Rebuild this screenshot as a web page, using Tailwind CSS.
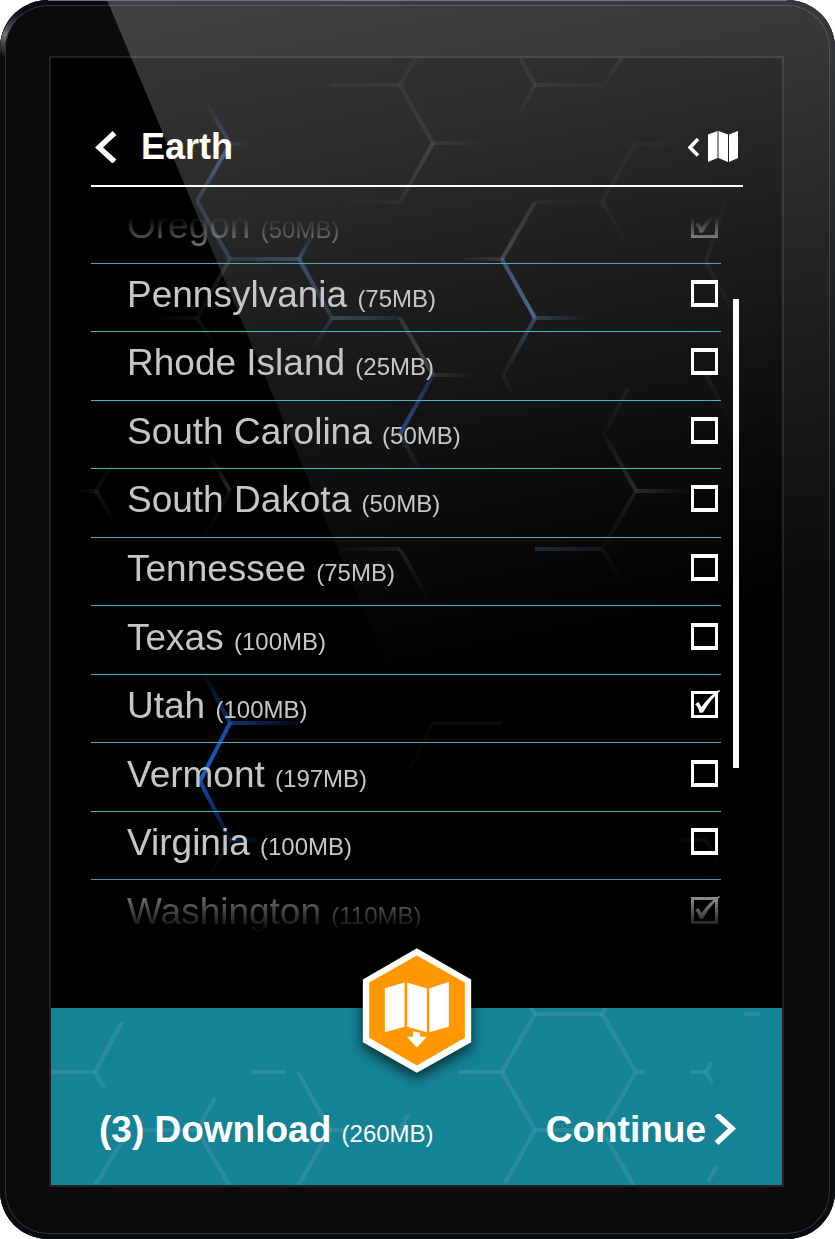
<!DOCTYPE html>
<html lang="en">
<head>
<meta charset="utf-8">
<meta name="viewport" content="width=device-width, initial-scale=1">
<title>Earth – Map downloads</title>
<script src="https://cdn.jsdelivr.net/npm/@tailwindcss/browser@4"></script>
</head>
<body class="bg-white font-['Liberation_Sans',Arial,sans-serif] text-[37px] leading-none">
<div class="relative flex min-h-screen flex-col overflow-hidden rounded-[48px] bg-[#0b0b0b] pt-14 pr-[51px] pb-[52px] pl-[49px] shadow-[inset_0_0_0_5px_#080b10,inset_0_0_0_6px_#303030]">

  <!-- Glass reflection across bezel and screen -->
  <svg class="pointer-events-none absolute inset-0 z-10 h-full w-full" viewBox="0 0 835 1239" preserveAspectRatio="none" aria-hidden="true">
    <defs>
      <linearGradient id="glare" gradientUnits="userSpaceOnUse" x1="0" y1="0" x2="146" y2="730">
        <stop offset="0" stop-color="#fff" stop-opacity=".23"/>
        <stop offset=".28" stop-color="#fff" stop-opacity=".175"/>
        <stop offset=".5" stop-color="#fff" stop-opacity=".115"/>
        <stop offset=".78" stop-color="#fff" stop-opacity=".045"/>
        <stop offset="1" stop-color="#fff" stop-opacity="0"/>
      </linearGradient>
      <linearGradient id="corner" gradientUnits="userSpaceOnUse" x1="0" y1="56" x2="24" y2="8">
        <stop offset="0" stop-color="#8a8d92" stop-opacity="0"/>
        <stop offset=".4" stop-color="#8a8d92" stop-opacity=".8"/>
        <stop offset="1" stop-color="#2a333d" stop-opacity="0"/>
      </linearGradient>
    </defs>
    <path d="M107 0H835V760H426Z" fill="url(#glare)"/>
    <path d="M3 56A46 46 0 0 1 28 8" fill="none" stroke="url(#corner)" stroke-width="5"/>
    <path d="M48 .5H787" stroke="#70777c" stroke-width="1"/>
  </svg>

  <div class="relative flex flex-1 flex-col border-2 border-[#202020] bg-black">
    <!-- Honeycomb backdrop -->
    <svg id="comb" class="pointer-events-none absolute inset-0 h-full w-full" viewBox="51 58 731 1127" preserveAspectRatio="none" fill="none" aria-hidden="true"></svg>

    <header class="relative z-20 mr-[39px] ml-10 flex items-center justify-between border-b-2 border-white pt-[59px] pb-2 text-white">
      <div class="flex h-[60px] items-center gap-6">
        <button type="button" aria-label="Back" class="ml-1 block">
          <svg class="h-8 w-[22px]" viewBox="0 0 22 32" fill="none" stroke="currentColor" stroke-width="5.500"><path d="M19.500 2L4 16.500L19.500 30.500"/></svg>
        </button>
        <h1 class="text-4xl leading-none font-bold">Earth</h1>
      </div>
      <button type="button" aria-label="Show map" class="mr-1 flex items-center gap-2">
        <svg class="h-5 w-3" viewBox="0 0 12 20" fill="none" stroke="currentColor" stroke-width="3.500"><path d="M10 2L2 10.500L10 18.500"/></svg>
        <svg class="h-8 w-[31px]" viewBox="0 0 31 32" fill="currentColor"><path d="M0 3.500L9.500 0V27L0 31ZM10.500 0L20 3.500V31L10.500 27ZM21 3.500L30 0V27L21 31Z"/></svg>
      </button>
    </header>

    <main class="relative z-20 mt-2 mr-[43px] mb-[59px] ml-10 flex flex-1 gap-3">
      <ul id="states" class="flex flex-1 flex-col mask-[linear-gradient(to_bottom,transparent_22px,black_72px,black_calc(100%-80px),transparent_calc(100%-16px))]"></ul>
      <div class="mt-[104px] mb-[181px] w-1.5 bg-white"></div>
    </main>

    <footer class="relative z-20 flex h-[177px] items-center justify-between bg-[#158396] pt-[66px] pr-[46px] pl-12 text-white">
      <svg id="footcomb" class="pointer-events-none absolute inset-0 h-full w-full" viewBox="51 1008 731 177" preserveAspectRatio="none" fill="none" aria-hidden="true"></svg>
      <svg class="absolute -top-[60px] left-1/2 h-[125px] w-[109px] -translate-x-1/2 overflow-visible drop-shadow-[0_5px_7px_rgba(0,0,0,0.7)]" viewBox="67 54 327 374" role="img" aria-label="Download maps">
        <path fill="#fff" d="M68 148L230 54L393 148V336L230 428L68 336Z"/>
        <path fill="#ff9800" d="M87 157L230 76L374 157V323L230 406L87 323Z"/>
        <path fill="#fff" d="M134 174L193 157V290L134 306ZM201 157L260 175V306L201 290ZM267 175L326 155V290L267 306ZM219 303L240 308V320H260L230 352L200 320H219Z"/>
      </svg>
      <button type="button" class="relative"><b>(3) Download</b> <span class="text-2xl leading-none">(260MB)</span></button>
      <button type="button" class="relative flex items-center gap-2 font-bold">Continue
        <svg class="h-8 w-[22px]" viewBox="0 0 22 32" fill="none" stroke="currentColor" stroke-width="5.500"><path d="M2.500 .5L18 14.500L2.500 29"/></svg>
      </button>
    </footer>
  </div>
</div>

<template id="row">
  <li class="flex flex-1 border-b border-[#4bb2ca] last:border-transparent">
    <label class="flex flex-1 items-center justify-between pr-[3px] pb-2 pl-9 text-[#c6c6c6]">
      <span class="pt-0.5"><span data-name></span> <span data-size class="text-2xl leading-none"></span></span>
      <span class="relative size-[27px]">
        <input type="checkbox" class="peer block size-[27px] appearance-none border-x-3 border-y-4 border-white checked:border-3">
        <svg class="pointer-events-none absolute inset-0 hidden overflow-visible peer-checked:block" viewBox="0 0 27 27" fill="#fff" aria-hidden="true"><path d="M4 13.300L7.500 11L10.500 16Q18 5 28 -1L29 0Q19 9 12 21.500L8.500 21.800Q7 15 4 13.300Z"/></svg>
      </span>
    </label>
  </li>
</template>

<script>
const states = [
  ['Oregon', 50, true], ['Pennsylvania', 75], ['Rhode Island', 25], ['South Carolina', 50],
  ['South Dakota', 50], ['Tennessee', 75], ['Texas', 100], ['Utah', 100, true],
  ['Vermont', 197], ['Virginia', 100], ['Washington', 110, true]
];
for (const [name, size, on] of states) {
  const row = document.getElementById('row').content.cloneNode(true);
  row.querySelector('[data-name]').textContent = name;
  row.querySelector('[data-size]').textContent = `(${size}MB)`;
  row.querySelector('input').checked = !!on;
  document.getElementById('states').append(row);
}

// Segments: x1, y1, x2, y2, colour, start opacity, end opacity
const G = '#606060', B = '#35589c', S = '#446888';
const dark = [
  [204,98,230,144,B,0,.4],[230,144,197,201,B,.8,.3],[230,144,248,144,B,.25,0],[197,201,230,259,S,.3,.35],
  [230,259,299,259,S,.2,.45],[299,259,315,230,B,.5,0],[299,259,332,318,B,.6,.3],[332,318,400,318,S,.45,.15],
  [332,318,312,350,S,.3,0],[400,318,433,375,G,.3,.5],[433,375,475,375,G,.3,0],[433,375,400,434,'#2450b8',.25,.75],
  [400,434,422,475,S,.3,0],[230,259,197,318,G,.3,.1],[197,318,150,318,G,.15,0],[197,318,217,348,G,.2,0],
  [330,85,400,85,G,.08,.15],[400,85,416,58,G,.12,.1],[400,85,433,143,G,.12,.2],[433,143,485,143,G,.2,0],
  [433,143,400,202,G,.35,.12],[400,202,345,202,G,.1,0],[520,58,535,85,G,.12,.16],[535,85,602,85,G,.16,.04],
  [604,85,622,58,B,.05,.15],[535,85,516,120,G,.16,0],[635,144,690,144,G,.08,0],[635,144,602,202,G,.07,.1],
  [602,202,535,202,G,.03,.08],[535,202,502,259,G,.2,.5],[502,259,460,259,G,.3,0],[502,259,535,318,'#5c8fd8',.4,.6],
  [535,318,588,318,S,.4,0],[535,318,503,375,S,.5,.08],[503,375,515,400,S,.15,0],[602,202,634,254,G,.1,0],
  [725,202,706,262,G,.04,.13],[706,262,732,310,G,.13,.05],[706,375,733,425,G,.13,0],[628,388,604,434,G,.14,.06],
  [604,434,636,491,G,.06,.35],[636,491,690,491,G,.35,0],[636,491,602,549,G,.2,.05],[535,549,602,549,S,.35,.15],
  [602,549,622,582,G,.12,0],[340,549,400,549,G,.04,.2],[400,549,432,606,G,.25,0],[210,455,230,491,G,.03,.4],
  [230,491,198,549,G,.15,0],[75,491,96,491,G,.02,.13],[96,491,118,455,G,.15,0],[96,491,118,528,G,.2,0],
  [202,670,230,723,'#1458c8',0,.6],[230,723,298,723,'#1458c8',.6,.1],[230,723,200,781,'#1a6be0',.7,.9],
  [200,781,230,840,'#1458c8',.85,.15],[230,840,265,840,'#1458c8',.4,0],[230,840,205,885,'#1a3a60',.3,0],
  [433,723,502,723,G,.1,.1],[433,723,404,781,G,.07,.02],[672,840,706,840,G,.02,.12],[706,840,724,872,G,.12,0]
];
const foot = [
  [51,1072,95,1072],[95,1072,122,1022],[95,1072,104,1088],[251,1072,286,1072],[298,1072,330,1130],[330,1130,298,1186],
  [330,1130,345,1130],[215,1098,197,1130],[197,1130,230,1186],[197,1130,140,1130],[125,1136,95,1186],[400,1130,408,1115],
  [458,1072,502,1072],[502,1072,535,1014],[535,1014,602,1014],[602,1014,636,1072],[636,1072,602,1130],[602,1130,535,1130],
  [535,1130,502,1072],[535,1130,505,1183],[602,1130,634,1186],[535,1014,531,1008],[602,1014,606,1008],[636,1072,645,1072],
  [690,1072,706,1072],[706,1072,712,1062],[706,1072,712,1083],[744,1014,760,1014],[717,1166,708,1182]
].map(s => [...s, '#a8b4c4', .17, .17]);

function draw(id, segments, width) {
  document.getElementById(id).innerHTML = segments.map(([x1, y1, x2, y2, c, a, b], i) => {
    const k = `${id}${i}`, p = `x1="${x1}" y1="${y1}" x2="${x2}" y2="${y2}"`;
    return `<linearGradient id="${k}" gradientUnits="userSpaceOnUse" ${p}><stop stop-color="${c}" stop-opacity="${a}"/><stop offset="1" stop-color="${c}" stop-opacity="${b}"/></linearGradient>
      <path d="M${x1} ${y1}L${x2} ${y2 + (y1 === y2 ? 0.01 : 0)}" stroke="url(#${k})" stroke-width="${width}"/>`;
  }).join('');
}
draw('comb', dark, 4);
draw('footcomb', foot, 4);
</script>
</body>
</html>
